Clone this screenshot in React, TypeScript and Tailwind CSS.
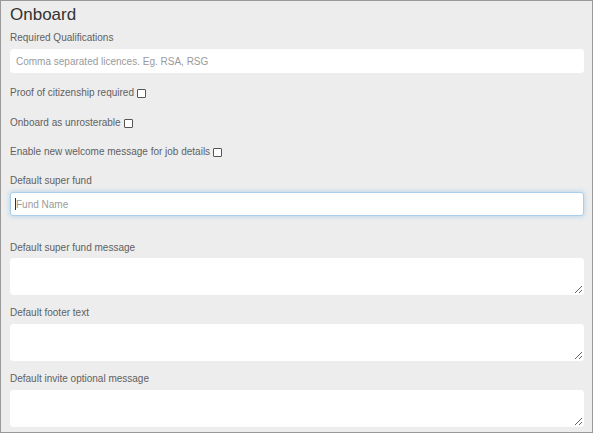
const font = { fontFamily: '"Liberation Sans", Arial, sans-serif' };

function Label({ text, className = "" }: { text: string; className?: string }) {
  return (
    <div className={`text-[10px] leading-[14px] text-[#616161] ${className}`}>{text}</div>
  );
}

function Check({ text, className = "" }: { text: string; className?: string }) {
  return (
    <label className={`flex items-center text-[10px] leading-[14px] text-[#616161] ${className}`}>
      <span>{text}</span>
      <span className="ml-[3px] inline-block h-[9px] w-[9px] rounded-[1px] border border-[#555] bg-white" />
    </label>
  );
}

function Area({ className = "" }: { className?: string }) {
  return (
    <textarea
      className={`block h-[37px] w-full rounded-[3px] border border-white bg-white px-[5px] text-[10px] outline-none ${className}`}
    />
  );
}

export default function App() {
  return (
    <div
      className="h-[433px] w-[593px] border border-[#999] bg-[#ededed] pl-[9px] pr-[8px] pt-[4px]"
      style={font}
    >
      <h2 className="text-[17px] leading-[20px] text-[#333]">Onboard</h2>

      <Label text="Required Qualifications" className="mt-[6px]" />
      <input
        className="mt-[4px] block h-[24px] w-full rounded-[3px] border border-white bg-white px-[5px] text-[10px] outline-none placeholder:text-[#9a9a9a]"
        placeholder="Comma separated licences. Eg. RSA, RSG"
      />

      <Check text="Proof of citizenship required" className="mt-[13px]" />
      <Check text="Onboard as unrosterable" className="mt-[16px]" />
      <Check text="Enable new welcome message for job details" className="mt-[15px]" />

      <Label text="Default super fund" className="mt-[15px]" />
      <div className="relative mt-[4px]">
        <input
          className="block h-[24px] w-full rounded-[3px] border border-[#a9cfee] bg-white px-[5px] text-[10px] shadow-[0_0_5px_rgba(102,175,233,0.5)] outline-none placeholder:text-[#9a9a9a]"
          placeholder="Fund Name"
        />
        <span className="absolute left-[5px] top-[6px] h-[12px] w-px bg-[#333]" />
      </div>

      <Label text="Default super fund message" className="mt-[25px]" />
      <Area className="mt-[3px]" />

      <Label text="Default footer text" className="mt-[11px]" />
      <Area className="mt-[4px]" />

      <Label text="Default invite optional message" className="mt-[11px]" />
      <Area className="mt-[4px]" />
    </div>
  );
}
